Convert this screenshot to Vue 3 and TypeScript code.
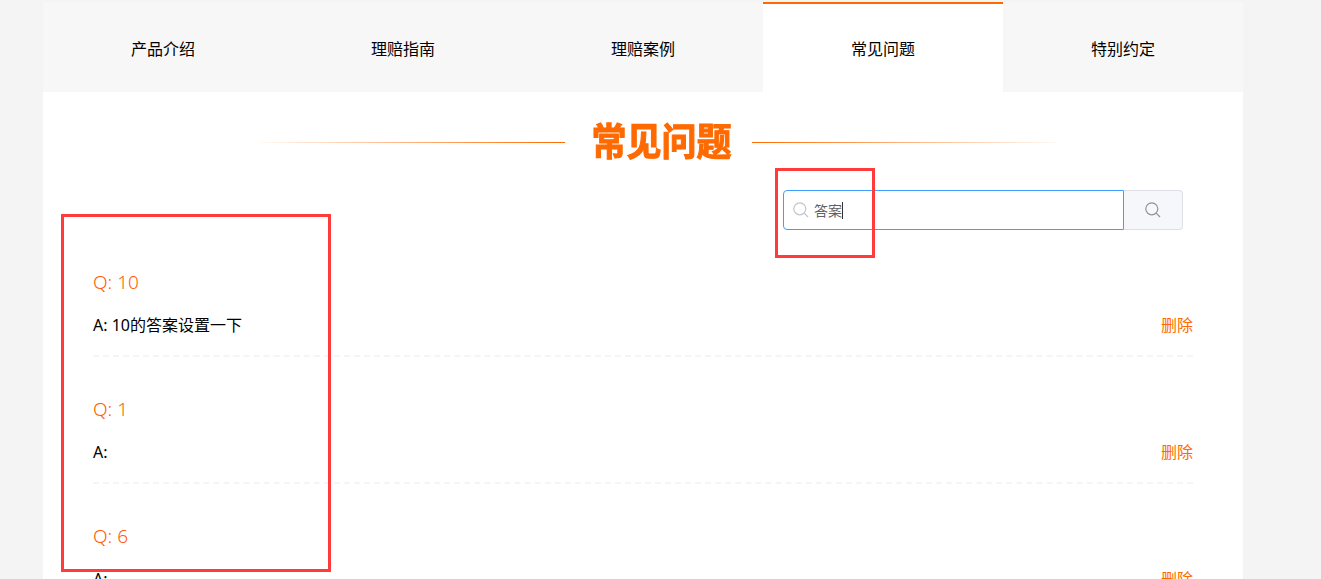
<script setup lang="ts">
const tabs = ['产品介绍', '理赔指南', '理赔案例', '常见问题', '特别约定'];
const activeTab = '常见问题';

const questions = [
    { q: '10', a: '10的答案设置一下' },
    { q: '1', a: '' },
    { q: '6', a: '' },
];
</script>

<template>
    <div class="page">
        <div class="container">
            <ul class="tabs">
                <li v-for="tab in tabs" :key="tab" :class="{ active: tab === activeTab }">{{ tab }}</li>
            </ul>

            <div class="content">
                <div class="title">
                    <span class="line left"></span>
                    <h2>常见问题</h2>
                    <span class="line right"></span>
                </div>

                <div class="search-row">
                    <div class="search">
                        <div class="search-input">
                            <svg class="icon prefix" viewBox="0 0 16 16" fill="none">
                                <circle cx="6.8" cy="6.8" r="6" />
                                <path d="M11.2 11.2L15 15" />
                            </svg>
                            <span class="value">答案</span>
                            <span class="caret"></span>
                        </div>
                        <button class="search-btn">
                            <svg class="icon" viewBox="0 0 16 16" fill="none">
                                <circle cx="6.8" cy="6.8" r="6" />
                                <path d="M11.2 11.2L15 15" />
                            </svg>
                        </button>
                    </div>
                </div>

                <div class="list">
                    <div v-for="item in questions" :key="item.q" class="item">
                        <p class="question">Q: {{ item.q }}</p>
                        <div class="answer-row">
                            <span class="answer">A: {{ item.a }}</span>
                            <a class="delete">删除</a>
                        </div>
                    </div>
                </div>
            </div>
        </div>

        <!-- red marks drawn over the screenshot -->
        <div class="mark mark-search"></div>
        <div class="mark mark-list"></div>
    </div>
</template>

<style scoped>
.page {
    position: relative;
    height: 579px;
    overflow: hidden;
    background-color: #f4f4f4;
    font-family: 'Noto Sans', 'Noto Sans CJK SC', sans-serif;
    color: #000;
}

.container {
    width: 1200px;
    margin-left: 43px;
    padding-top: 2px;
}

.tabs {
    display: flex;
    margin: 0;
    padding: 0;
    list-style: none;
    background-color: #f7f7f7;
}

.tabs li {
    flex: 1;
    height: 90px;
    line-height: 94px;
    text-align: center;
    font-size: 16px;
}

.tabs li.active {
    background-color: #fff;
    box-shadow: inset 0 2px 0 #ff6a00;
}

.content {
    background-color: #fff;
    padding-bottom: 40px;
}

.title {
    display: flex;
    align-items: center;
    justify-content: center;
    height: 98px;
    padding-left: 31px;
}

.title h2 {
    box-sizing: border-box;
    width: 187px;
    margin: 0;
    padding-left: 6px;
    text-align: center;
    font-size: 35px;
    font-weight: 700;
    line-height: 98px;
    color: #ff6a00;
    -webkit-text-stroke: 1px #ff6a00;
    transform: scaleY(1.08);
}

.line {
    width: 305px;
    height: 1px;
    margin-top: 2px;
    background-color: #ff6a00;
}

.line.left {
    mask-image: linear-gradient(to right, rgba(0, 0, 0, 0.04), #000);
}

.line.right {
    mask-image: linear-gradient(to left, rgba(0, 0, 0, 0.04), #000);
}

.search-row {
    display: flex;
    justify-content: flex-end;
    padding-right: 60px;
}

.search {
    display: flex;
    width: 400px;
    height: 40px;
}

.search-input {
    flex: 1;
    display: flex;
    align-items: center;
    box-sizing: border-box;
    padding-left: 9px;
    border: 1px solid #409eff;
    border-radius: 4px 0 0 4px;
}

.icon {
    width: 16px;
    height: 16px;
    stroke: #909399;
    stroke-width: 1.2;
}

.icon.prefix {
    stroke: #c0c4cc;
}

.value {
    margin-left: 5px;
    font-size: 14px;
    color: #606266;
}

.caret {
    width: 1px;
    height: 17px;
    background-color: #303133;
}

.search-btn {
    display: flex;
    align-items: center;
    justify-content: center;
    width: 59px;
    padding: 0;
    background-color: #f5f7fa;
    border: 1px solid #dcdfe6;
    border-left: 0;
    border-radius: 0 4px 4px 0;
}

.list {
    padding: 0 50px;
    margin-top: 26px;
}

.item {
    height: 99px;
    margin-bottom: 26px;
    border-bottom: 2px dashed #f5f5f5;
}

.question {
    margin: 0;
    padding-top: 13px;
    font-size: 19px;
    font-weight: 300;
    line-height: 26px;
    color: #ff5c00;
}

.answer-row {
    display: flex;
    justify-content: space-between;
    margin-top: 18px;
    font-size: 16px;
    line-height: 24px;
}

.delete {
    color: #ff6a00;
}

.mark {
    position: absolute;
    box-sizing: border-box;
    border: 3px solid #ff3b3b;
}

.mark-search {
    left: 775px;
    top: 168px;
    width: 100px;
    height: 90px;
}

.mark-list {
    left: 61px;
    top: 214px;
    width: 270px;
    height: 358px;
}
</style>

<style>
html,
body {
    overflow: hidden;
}
</style>
